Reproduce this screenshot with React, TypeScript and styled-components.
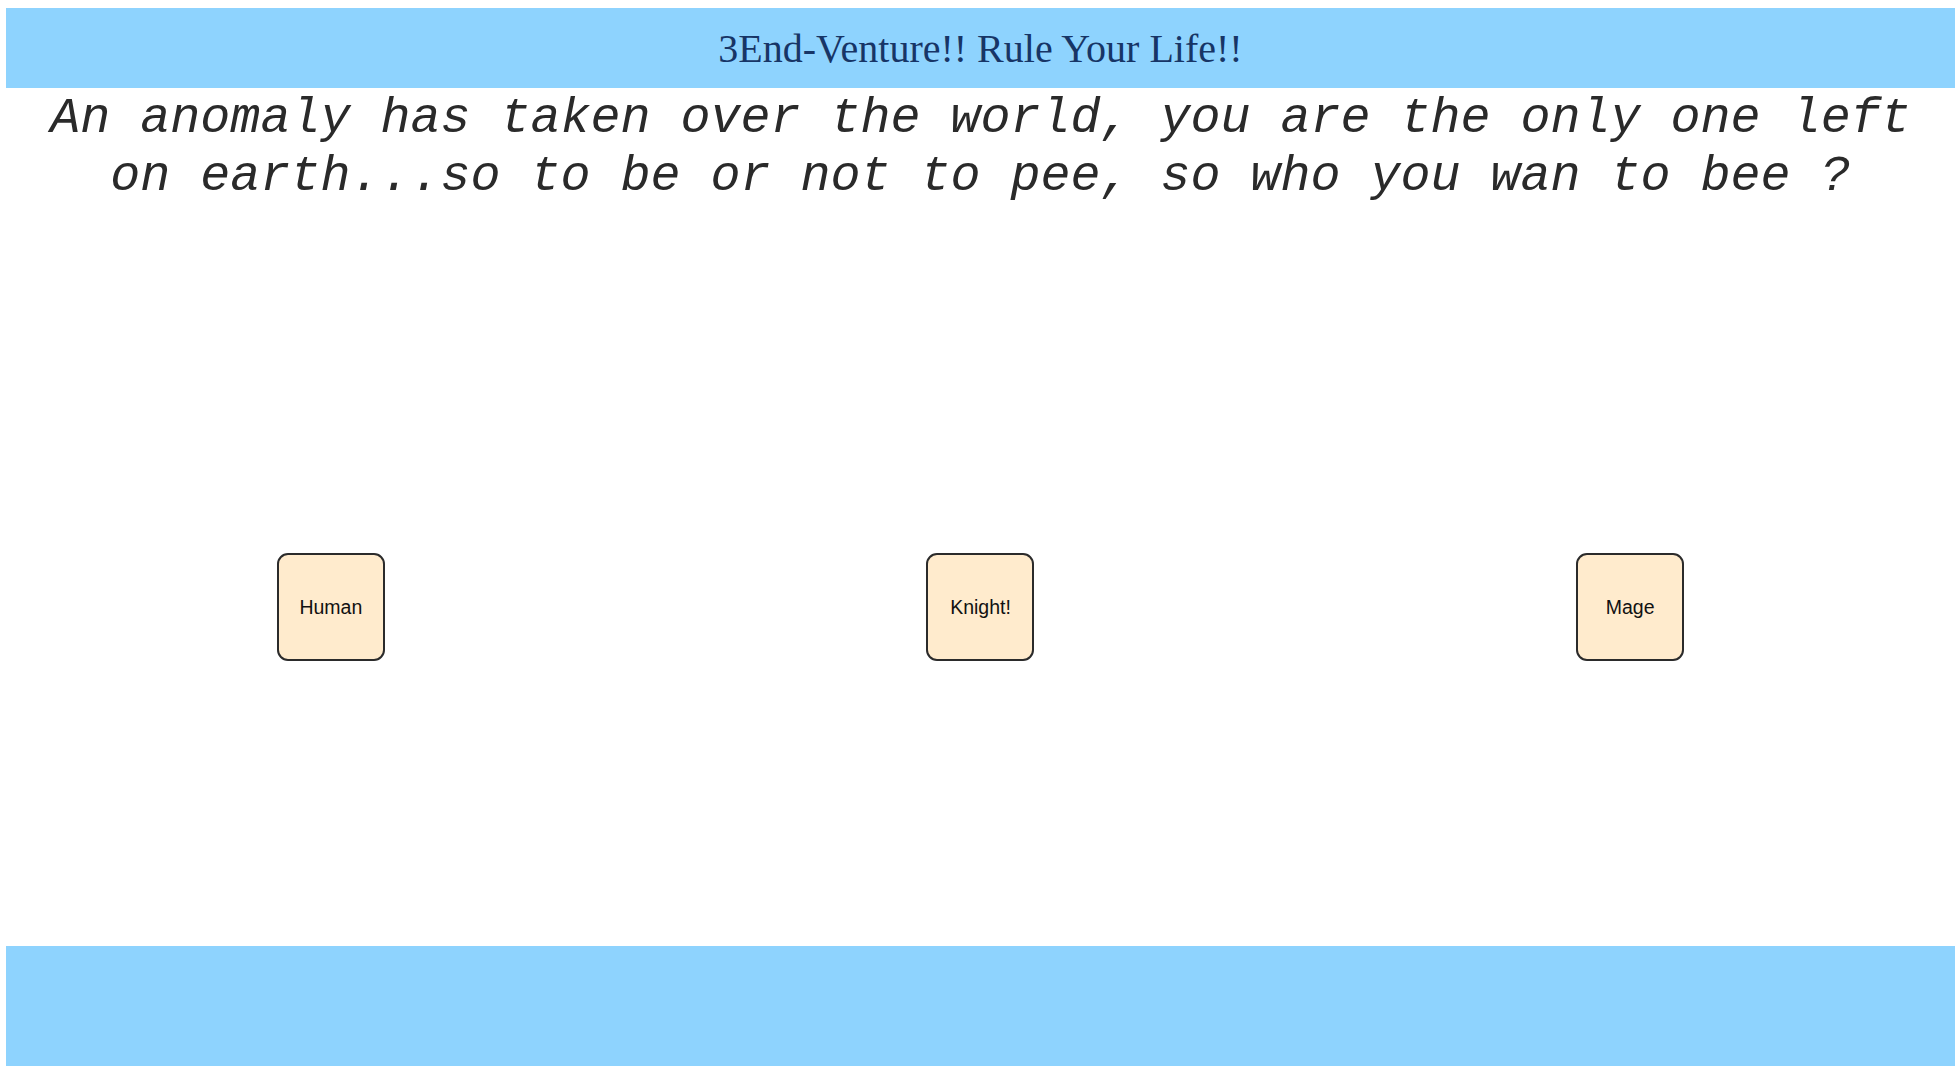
import styled, { createGlobalStyle } from "styled-components";

const GlobalStyle = createGlobalStyle`
  body {
    margin: 8px 4px 10px 6px;
    background: #ffffff;
  }
`;

const Page = styled.div`
  display: flex;
  flex-direction: column;
`;

const TitleBar = styled.header`
  height: 80px;
  display: flex;
  align-items: center;
  justify-content: center;
  background-color: #8ed3fe;
`;

const Title = styled.h1`
  margin: 0;
  font-family: "Liberation Serif", "Times New Roman", serif;
  font-weight: normal;
  font-size: 40px;
  color: #173566;
`;

const Story = styled.p`
  margin: 0;
  padding-top: 2px;
  height: 115px;
  box-sizing: border-box;
  text-align: center;
  font-family: "Liberation Mono", "Courier New", monospace;
  font-style: italic;
  font-size: 50px;
  line-height: 57.5px;
  color: #2a2a2a;
`;

const Stage = styled.main`
  height: 743px;
  box-sizing: border-box;
  padding-top: 350px;
`;

const Choices = styled.div`
  display: grid;
  grid-template-columns: repeat(3, 1fr);
  justify-items: center;
`;

const ChoiceButton = styled.button`
  width: 108px;
  height: 108px;
  box-sizing: border-box;
  border: 2px solid #2b2b2b;
  border-radius: 11px;
  background-color: #ffebcd;
  font-family: "Liberation Sans", Arial, sans-serif;
  font-size: 19.5px;
  color: #111;
  cursor: pointer;
  padding: 0;
`;

const Footer = styled.footer`
  height: 120px;
  background-color: #8ed3fe;
`;

const classes = ["Human", "Knight!", "Mage"];

const App = () => {
  return (
    <Page>
      <GlobalStyle />
      <TitleBar>
        <Title>3End-Venture!! Rule Your Life!!</Title>
      </TitleBar>
      <Story>
        An anomaly has taken over the world, you are the only one left on
        earth...so to be or not to pee, so who you wan to bee ?
      </Story>
      <Stage>
        <Choices>
          {classes.map((name) => (
            <ChoiceButton key={name}>{name}</ChoiceButton>
          ))}
        </Choices>
      </Stage>
      <Footer />
    </Page>
  );
};

export default App;
